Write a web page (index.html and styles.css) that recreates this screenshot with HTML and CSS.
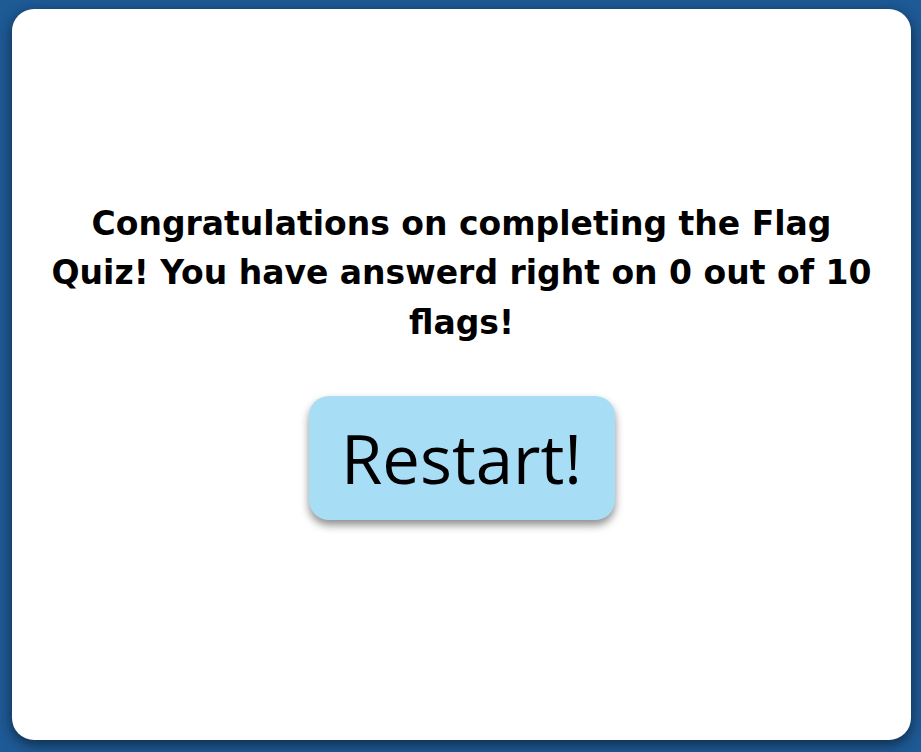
FILE: index.html
```html
<!DOCTYPE html>
<html lang="en">
<head>
<meta charset="utf-8">
<title>Flag Quiz</title>
<link rel="stylesheet" href="styles.css">
</head>
<body>
<main class="card">
  <p class="result">Congratulations on completing the Flag Quiz! You have answerd right on 0 out of 10 flags!</p>
  <button class="restart" type="button">Restart!</button>
</main>
</body>
</html>
```
FILE: styles.css
```css
html, body {
  height: 100%;
}
body {
  margin: 0;
  box-sizing: border-box;
  padding: 9px 10px 12px 12px;
  background: #1e5a96;
  font-family: "DejaVu Sans", "Liberation Sans", sans-serif;
  display: flex;
}
.card {
  flex: 1;
  background: #ffffff;
  border-radius: 22px;
  box-shadow: 0 4px 14px rgba(0, 0, 0, 0.55);
  display: flex;
  flex-direction: column;
  align-items: center;
  justify-content: center;
  padding: 0 30px 30px;
  gap: 49px;
}
.result {
  margin: 0;
  text-align: center;
  font-size: 33px;
  font-weight: 700;
  line-height: 49.5px;
  color: #000;
}
.restart {
  width: 306px;
  height: 124px;
  border: none;
  border-radius: 20px;
  background: #a8ddf6;
  box-shadow: 0 5px 8px rgba(0, 0, 0, 0.45);
  font-family: "Open Sans", "Liberation Sans", sans-serif;
  font-size: 67px;
  color: #000;
  cursor: pointer;
  padding: 0;
}
```
